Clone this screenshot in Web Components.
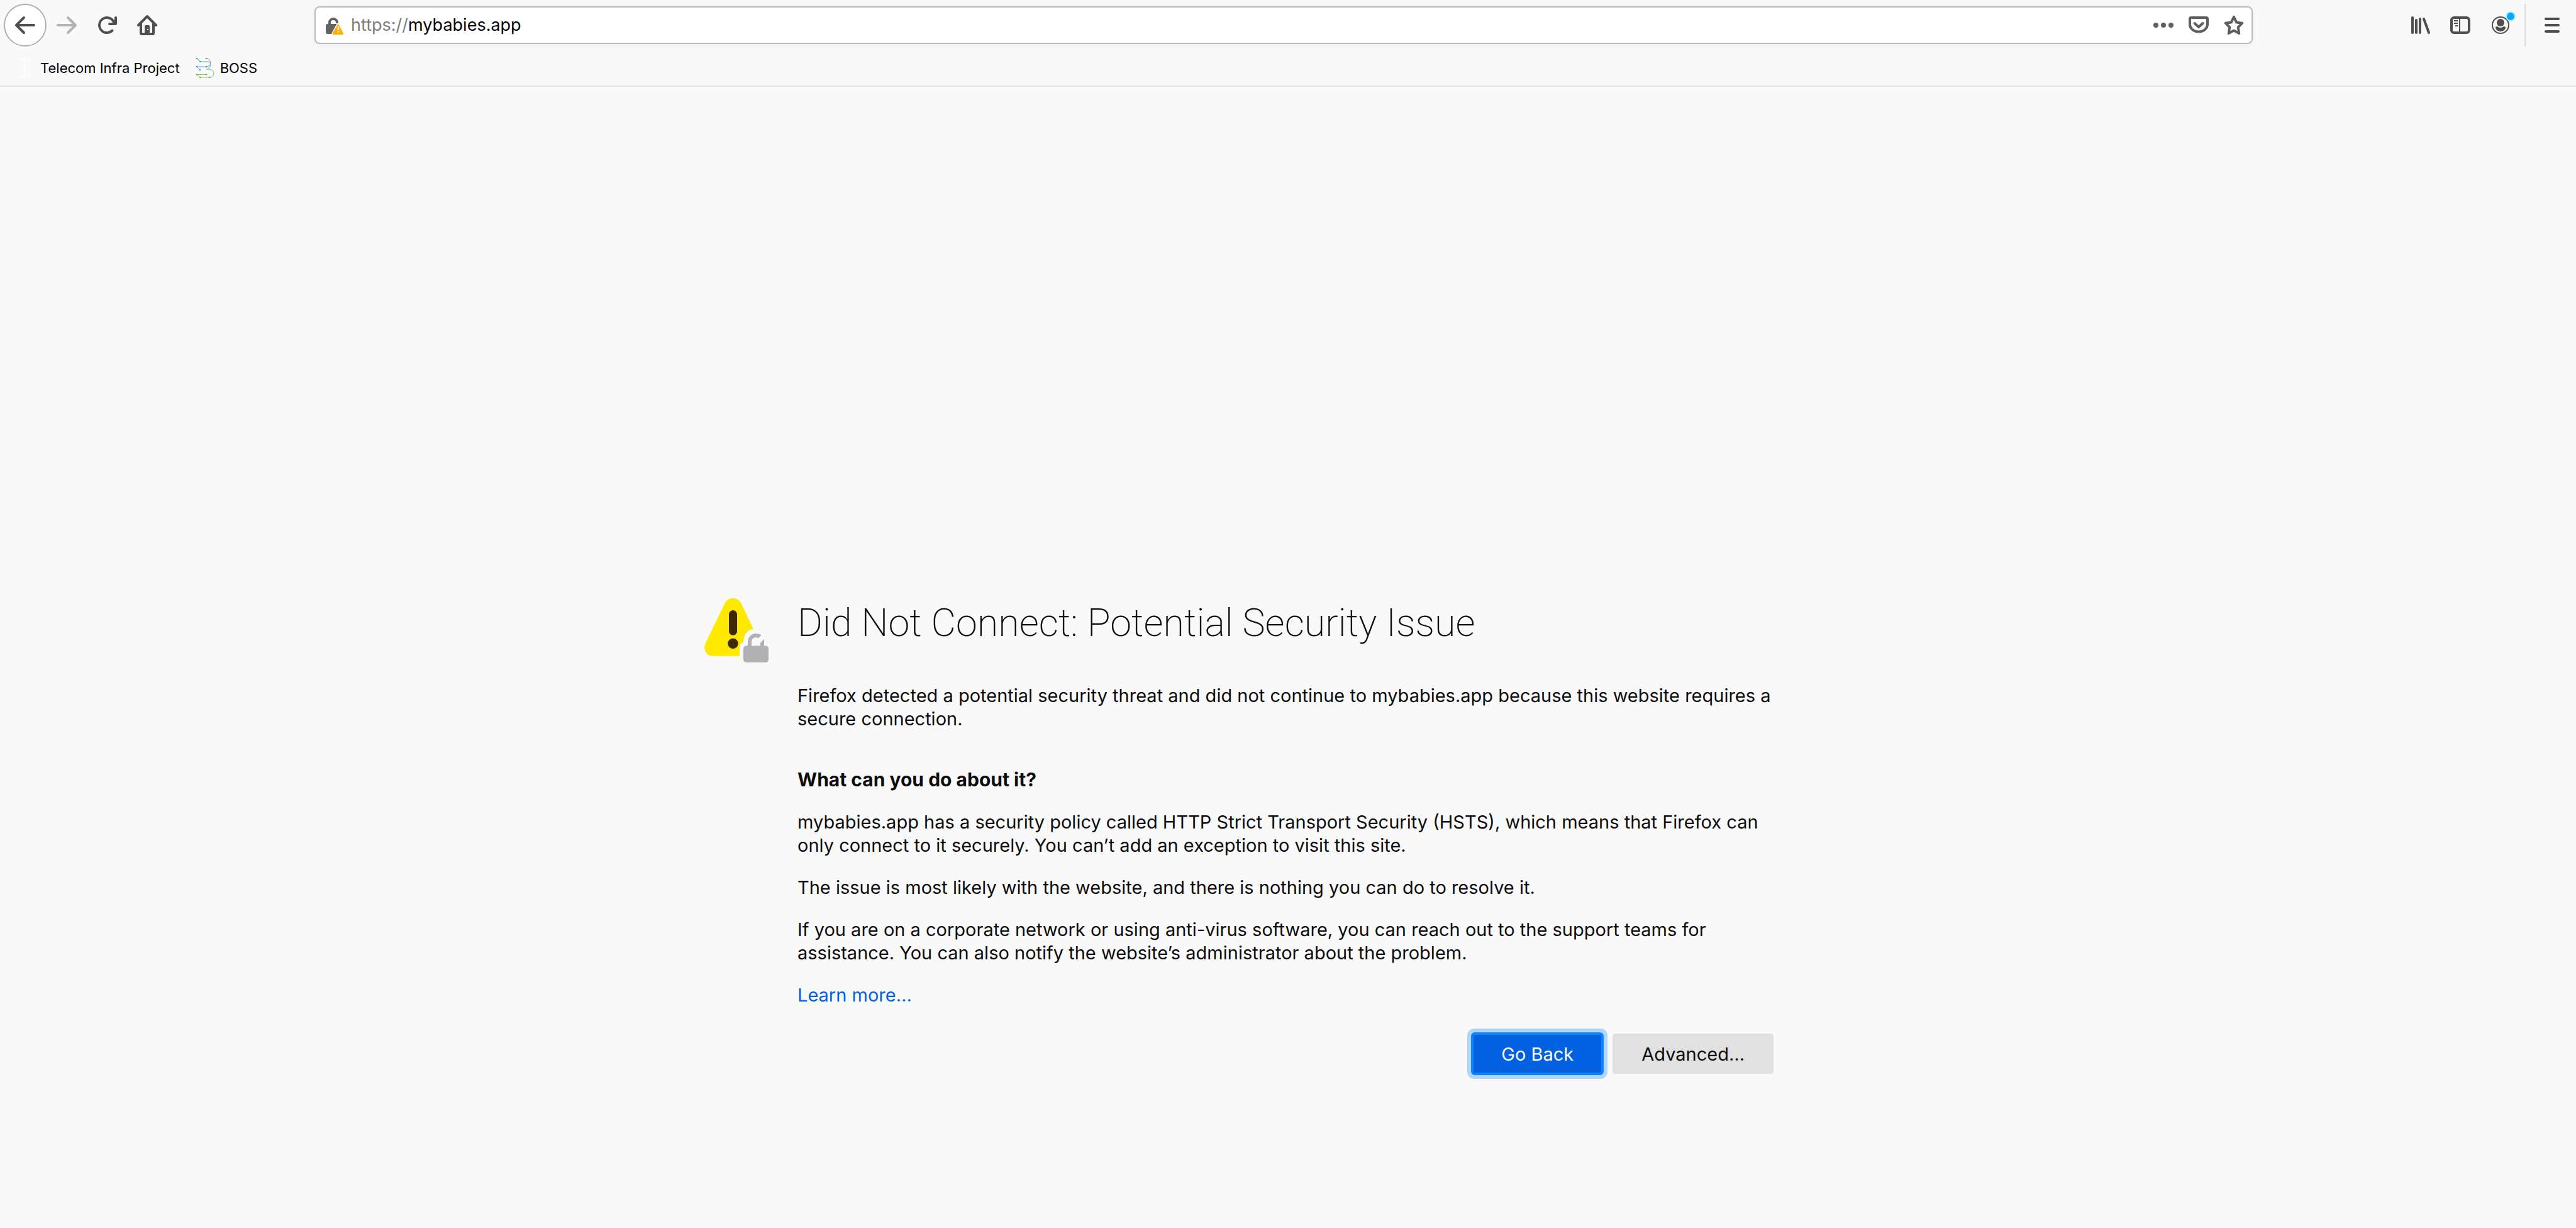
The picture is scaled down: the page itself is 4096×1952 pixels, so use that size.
<!DOCTYPE html>
<html lang="en">
<head>
<meta charset="utf-8">
<title>Did Not Connect: Potential Security Issue</title>
<style>
  body { margin: 0; min-height: 100vh; background: #f9f9fa; color: #0c0c0d; font-family: Inter, "Liberation Sans", sans-serif; }
</style>
</head>
<body>
<browser-window></browser-window>

<template id="t-window">
  <style>
    :host { display: flex; flex-direction: column; min-height: 100vh; }
    header { border-bottom: 2px solid #e1e1e2; color: #000; }
    main { flex: 1; }
  </style>
  <header>
    <nav-bar></nav-bar>
    <bookmark-bar></bookmark-bar>
  </header>
  <main><error-page></error-page></main>
</template>

<template id="t-button">
  <style>
    :host { display: block; flex: none; }
    button { display: flex; align-items: center; justify-content: center; width: 64px; height: 68px; padding: 0; border: 0; background: none; color: #4f4f4f; }
    :host([round]) button { width: 68px; border: 2px solid #b1b1b1; border-radius: 50%; background: #fff; }
    :host([small]) button { width: 56px; height: 56px; color: #5e5e5e; }
    button:disabled { color: #b3b3b3; }
  </style>
  <button type="button"><slot></slot></button>
</template>

<template id="t-nav">
  <style>
    :host { display: flex; align-items: center; height: 80px; padding: 0 6px; }
    svg { display: block; width: 32px; height: 32px; fill: currentColor; overflow: visible; }
    .line { fill: none; stroke: currentColor; stroke-width: 2; stroke-linecap: round; stroke-linejoin: round; }
    .spring { flex: 6; }
    url-bar { flex: 79; }
    .rule { width: 2px; height: 68px; margin: 0 10px 0 6px; background: #dedede; }
  </style>
  <tool-button round label="Back"><svg viewBox="0 0 16 16"><path d="M15 7H3.414l4.293-4.293a1 1 0 0 0-1.414-1.414l-6 6a1 1 0 0 0 0 1.414l6 6a1 1 0 0 0 1.414-1.414L3.414 9H15a1 1 0 0 0 0-2z"/></svg></tool-button>
  <tool-button disabled label="Forward"><svg viewBox="0 0 16 16"><path d="M1 7h11.586L8.293 2.707a1 1 0 0 1 1.414-1.414l6 6a1 1 0 0 1 0 1.414l-6 6a1 1 0 0 1-1.414-1.414L12.586 9H1a1 1 0 0 1 0-2z"/></svg></tool-button>
  <tool-button label="Reload"><svg viewBox="0 0 16 16"><path d="M15 1a1 1 0 0 0-1 1v2.418A6.995 6.995 0 1 0 8 15a6.954 6.954 0 0 0 4.95-2.05 1 1 0 0 0-1.414-1.414A5.019 5.019 0 1 1 12.549 6H10a1 1 0 0 0 0 2h5a1 1 0 0 0 1-1V2a1 1 0 0 0-1-1z"/></svg></tool-button>
  <tool-button label="Home"><svg viewBox="0 0 16 16"><path class="line" d="M1 8 8 1l7 7M3 7v7.2q0 .8.8.8h8.400q.8 0 .8-.8V7"/><path fill-rule="evenodd" d="M6 15V9a1 1 0 0 1 1-1h2a1 1 0 0 1 1 1v6zM8 11v1h1v-1z"/></svg></tool-button>
  <div class="spring"></div>
  <url-bar></url-bar>
  <div class="spring"></div>
  <tool-button label="Library"><svg viewBox="0 0 32 32"><path class="line" style="stroke-width:4" d="M4 4v24M10 8v20M16 6v22M22 6l8 22"/></svg></tool-button>
  <tool-button label="Sidebars"><svg viewBox="0 0 32 32"><rect class="line" style="stroke-width:4" x="2" y="4" width="28" height="24" rx="4"/><path d="M14 4h2v24h-2zM6 8h6v2H6zM6 12h6v2H6zM8 16h4v2H8z"/></svg></tool-button>
  <tool-button label="Account"><svg viewBox="0 0 32 32"><circle class="line" cx="16" cy="16" r="13"/><circle cx="16" cy="12" r="6"/><path d="M8 20q0-2 2-2 1.500 0 2.500 1 3.500 2 7 0 1-1 2.500-1 2 0 2 2c0 3-4 6-8 6s-8-3-8-6z"/><circle cx="32" cy="2" r="8" fill="#b9e9ff"/><circle cx="32" cy="2" r="6" fill="#00aeff"/></svg></tool-button>
  <div class="rule"></div>
  <tool-button label="Menu"><svg viewBox="0 0 32 32"><path class="line" style="stroke-width:4" d="M6 6h20M6 16h20M6 26h20"/></svg></tool-button>
</template>

<template id="t-url">
  <style>
    :host { display: block; }
    form { display: flex; align-items: center; box-sizing: border-box; height: 60px; padding: 0 0 0 14px; background: #fff; border: 2px solid #bcbcbc; border-radius: 8px; box-shadow: 0 2px 8px rgba(0,0,0,.06); font-size: 27px; line-height: 36px; }
    .id { display: block; width: 32px; height: 32px; margin-right: 10px; }
    label { color: #7d7d7d; }
    input { flex: 1; min-width: 0; padding: 0; border: 0; outline: 0; background: none; font: inherit; color: #000; }
    tool-button svg { display: block; width: 32px; height: 32px; fill: currentColor; }
    .line { fill: none; stroke: currentColor; stroke-width: 4; stroke-linecap: round; stroke-linejoin: round; }
  </style>
  <form>
    <svg class="id" viewBox="0 0 32 32" aria-hidden="true">
      <path d="M8 16v-4a6 6 0 0 1 12 0v1" fill="none" stroke="#636363" stroke-width="4"/>
      <path d="M5 14h16L12.500 30H5q-3 0-3-3V17q0-3 3-3z" fill="#636363"/>
      <path d="M21 15.500 13.500 29q-.5 1.500 1 1.500h13.400q1.500 0 1-1.500L22.500 15.500q-.75-1.400-1.500 0z" fill="#ffab00" stroke="#fff" stroke-width="4"/>
      <path d="M20.500 15.500 12.500 29q-.6 2 1.500 2h14.500q2.100 0 1.500-2L23 15.500q-1.250-1.600-2.500 0z" fill="#ffb000"/>
      <path d="M20.800 18h2v6h-2zM20.800 25.500h2v2h-2z" fill="#fff"/>
    </svg>
    <label for="url">https://</label>
    <input id="url" type="text" value="mybabies.app" spellcheck="false">
    <tool-button small label="Page actions"><svg viewBox="0 0 32 32"><circle cx="4" cy="16" r="4"/><circle cx="16" cy="16" r="4"/><circle cx="28" cy="16" r="4"/></svg></tool-button>
    <tool-button small label="Save to Pocket"><svg viewBox="0 0 32 32"><path class="line" d="M4 4h24q2 0 2 2v8.500a14 12 0 0 1-28 0V6q0-2 2-2z"/><path class="line" d="m9.500 13 6.500 6 6.500-6"/></svg></tool-button>
    <tool-button small label="Bookmark this page"><svg viewBox="0 0 32 32"><path class="line" d="m16 2.800 4.100 8.600 9.200 1.300-6.600 6.600 1.500 9.700L16 24.600 7.800 29l1.500-9.700-6.600-6.600 9.200-1.300z"/></svg></tool-button>
  </form>
</template>

<template id="t-bookmarks">
  <style>
    :host { display: flex; align-items: center; gap: 24px; height: 56px; padding: 0 24px; font-size: 22px; line-height: 32px; }
    a { display: flex; align-items: center; gap: 8px; color: #000; text-decoration: none; }
    svg { display: block; width: 32px; height: 32px; fill: none; stroke-width: 1; }
  </style>
  <a href="#telecom"><svg viewBox="0 0 32 32" aria-hidden="true"><path d="M8 1h14M15 1v30M8 31h14" stroke="#fcfcfd" stroke-width="4"/></svg>Telecom Infra Project</a>
  <a href="#boss"><svg viewBox="0 0 32 32" aria-hidden="true">
    <path d="m3 1 5.500 5H21q4 0 4 4 0 6-6 8" stroke="#56b3a4"/><path d="M18 1q6 0 6.500 7" stroke="#a68aae"/>
    <path d="M8 19 3 14h15q6 0 6.500-6" stroke="#57aede"/><path d="M18 18h4q8 1 8 7 0 6-7 6" stroke="#79c878"/><path d="M18 26.500H3L8.500 31H24" stroke="#93c64d"/>
    <g stroke="none"><circle cx="3" cy="1" r="1.300" fill="#4ca795"/><circle cx="8.500" cy="6" r="1.300" fill="#4ca795"/><circle cx="18" cy="1" r="1.300" fill="#98799f"/><circle cx="3" cy="14" r="1.300" fill="#439dd0"/><circle cx="8" cy="19" r="1.300" fill="#439dd0"/><circle cx="18" cy="14" r="1.300" fill="#7a8fb8"/><circle cx="3" cy="26.500" r="1.300" fill="#83b33d"/><circle cx="18" cy="26.500" r="1.300" fill="#83b33d"/><circle cx="8.500" cy="31" r="1.300" fill="#83b33d"/><circle cx="23" cy="31" r="1.300" fill="#83b33d"/></g>
  </svg>BOSS</a>
</template>

<template id="t-error">
  <style>
    :host { display: flex; justify-content: center; gap: 44px; box-sizing: border-box; padding: 812px 148px 0 0; font-size: 29px; line-height: 37px; }
    .icon { flex: none; width: 104px; height: 104px; }
    article { width: 1560px; }
    h1 { margin: 0 0 56px; font-family: Roboto, Inter, sans-serif; font-size: 61px; line-height: 81px; font-weight: 200; }
    h2 { margin: 60px 0 30px; font-size: 30px; line-height: inherit; font-weight: 700; }
    p { margin: 0 0 30px; }
    a { color: #0060df; text-decoration: none; }
    .actions { display: flex; justify-content: flex-end; gap: 16px; margin: 43px 8px 0 0; }
    button { height: 64px; padding: 0 46px; border: 0; border-radius: 4px; background: #e1e1e2; color: #0c0c0d; font: inherit; }
    .primary { background: #0060df; color: #fff; box-shadow: inset 0 0 0 2px #0a84ff, 0 0 0 2px #0a84ff, 0 0 0 8px rgba(10,132,255,.3); }
  </style>
  <svg class="icon" viewBox="0 0 104 104" aria-hidden="true">
    <path d="M33 8C38-1.300 53-1.300 58 8L78 50C67 51 62.500 60 62 71 58 72 56 75 56 79V92.700H12C3 92.700-2.500 82 1.500 73z" fill="#ffe900"/>
    <rect x="39" y="20" width="13" height="40" rx="6.500" fill="#3e2800"/><circle cx="45.500" cy="73" r="8.300" fill="#3e2800"/>
    <rect x="62" y="76.500" width="40" height="26.500" rx="4.500" fill="#b1b1b3"/>
    <path d="M69 78v-8a13 13 0 0 1 13-13c3.500 0 6.500 1 8.700 2.500L86 64.200C80 61.500 75 65 75 70v8zM89 78v-6l6-6.300V78z" fill="#b1b1b3"/>
  </svg>
  <article>
    <h1>Did Not Connect: Potential Security Issue</h1>
    <p>Firefox detected a potential security threat and did not continue to mybabies.app because this website requires a secure connection.</p>
    <h2>What can you do about it?</h2>
    <p>mybabies.app has a security policy called HTTP Strict Transport Security (HSTS), which means that Firefox can only connect to it securely. You can’t add an exception to visit this site.</p>
    <p>The issue is most likely with the website, and there is nothing you can do to resolve it.</p>
    <p>If you are on a corporate network or using anti-virus software, you can reach out to the support teams for assistance. You can also notify the website’s administrator about the problem.</p>
    <p><a href="#learn">Learn more…</a></p>
    <div class="actions"><button type="button" class="primary">Go Back</button><button type="button">Advanced…</button></div>
  </article>
</template>

<script>
  const define = (name, templateId, setup) => customElements.define(name, class extends HTMLElement {
    constructor() {
      super();
      this.attachShadow({ mode: "open" }).append(document.getElementById(templateId).content.cloneNode(true));
    }
    connectedCallback() { if (setup) setup(this); }
  });
  define("tool-button", "t-button", host => {
    const button = host.shadowRoot.querySelector("button");
    button.setAttribute("aria-label", host.getAttribute("label"));
    button.disabled = host.hasAttribute("disabled");
  });
  define("url-bar", "t-url");
  define("nav-bar", "t-nav");
  define("bookmark-bar", "t-bookmarks");
  define("error-page", "t-error");
  define("browser-window", "t-window");
</script>
</body>
</html>
